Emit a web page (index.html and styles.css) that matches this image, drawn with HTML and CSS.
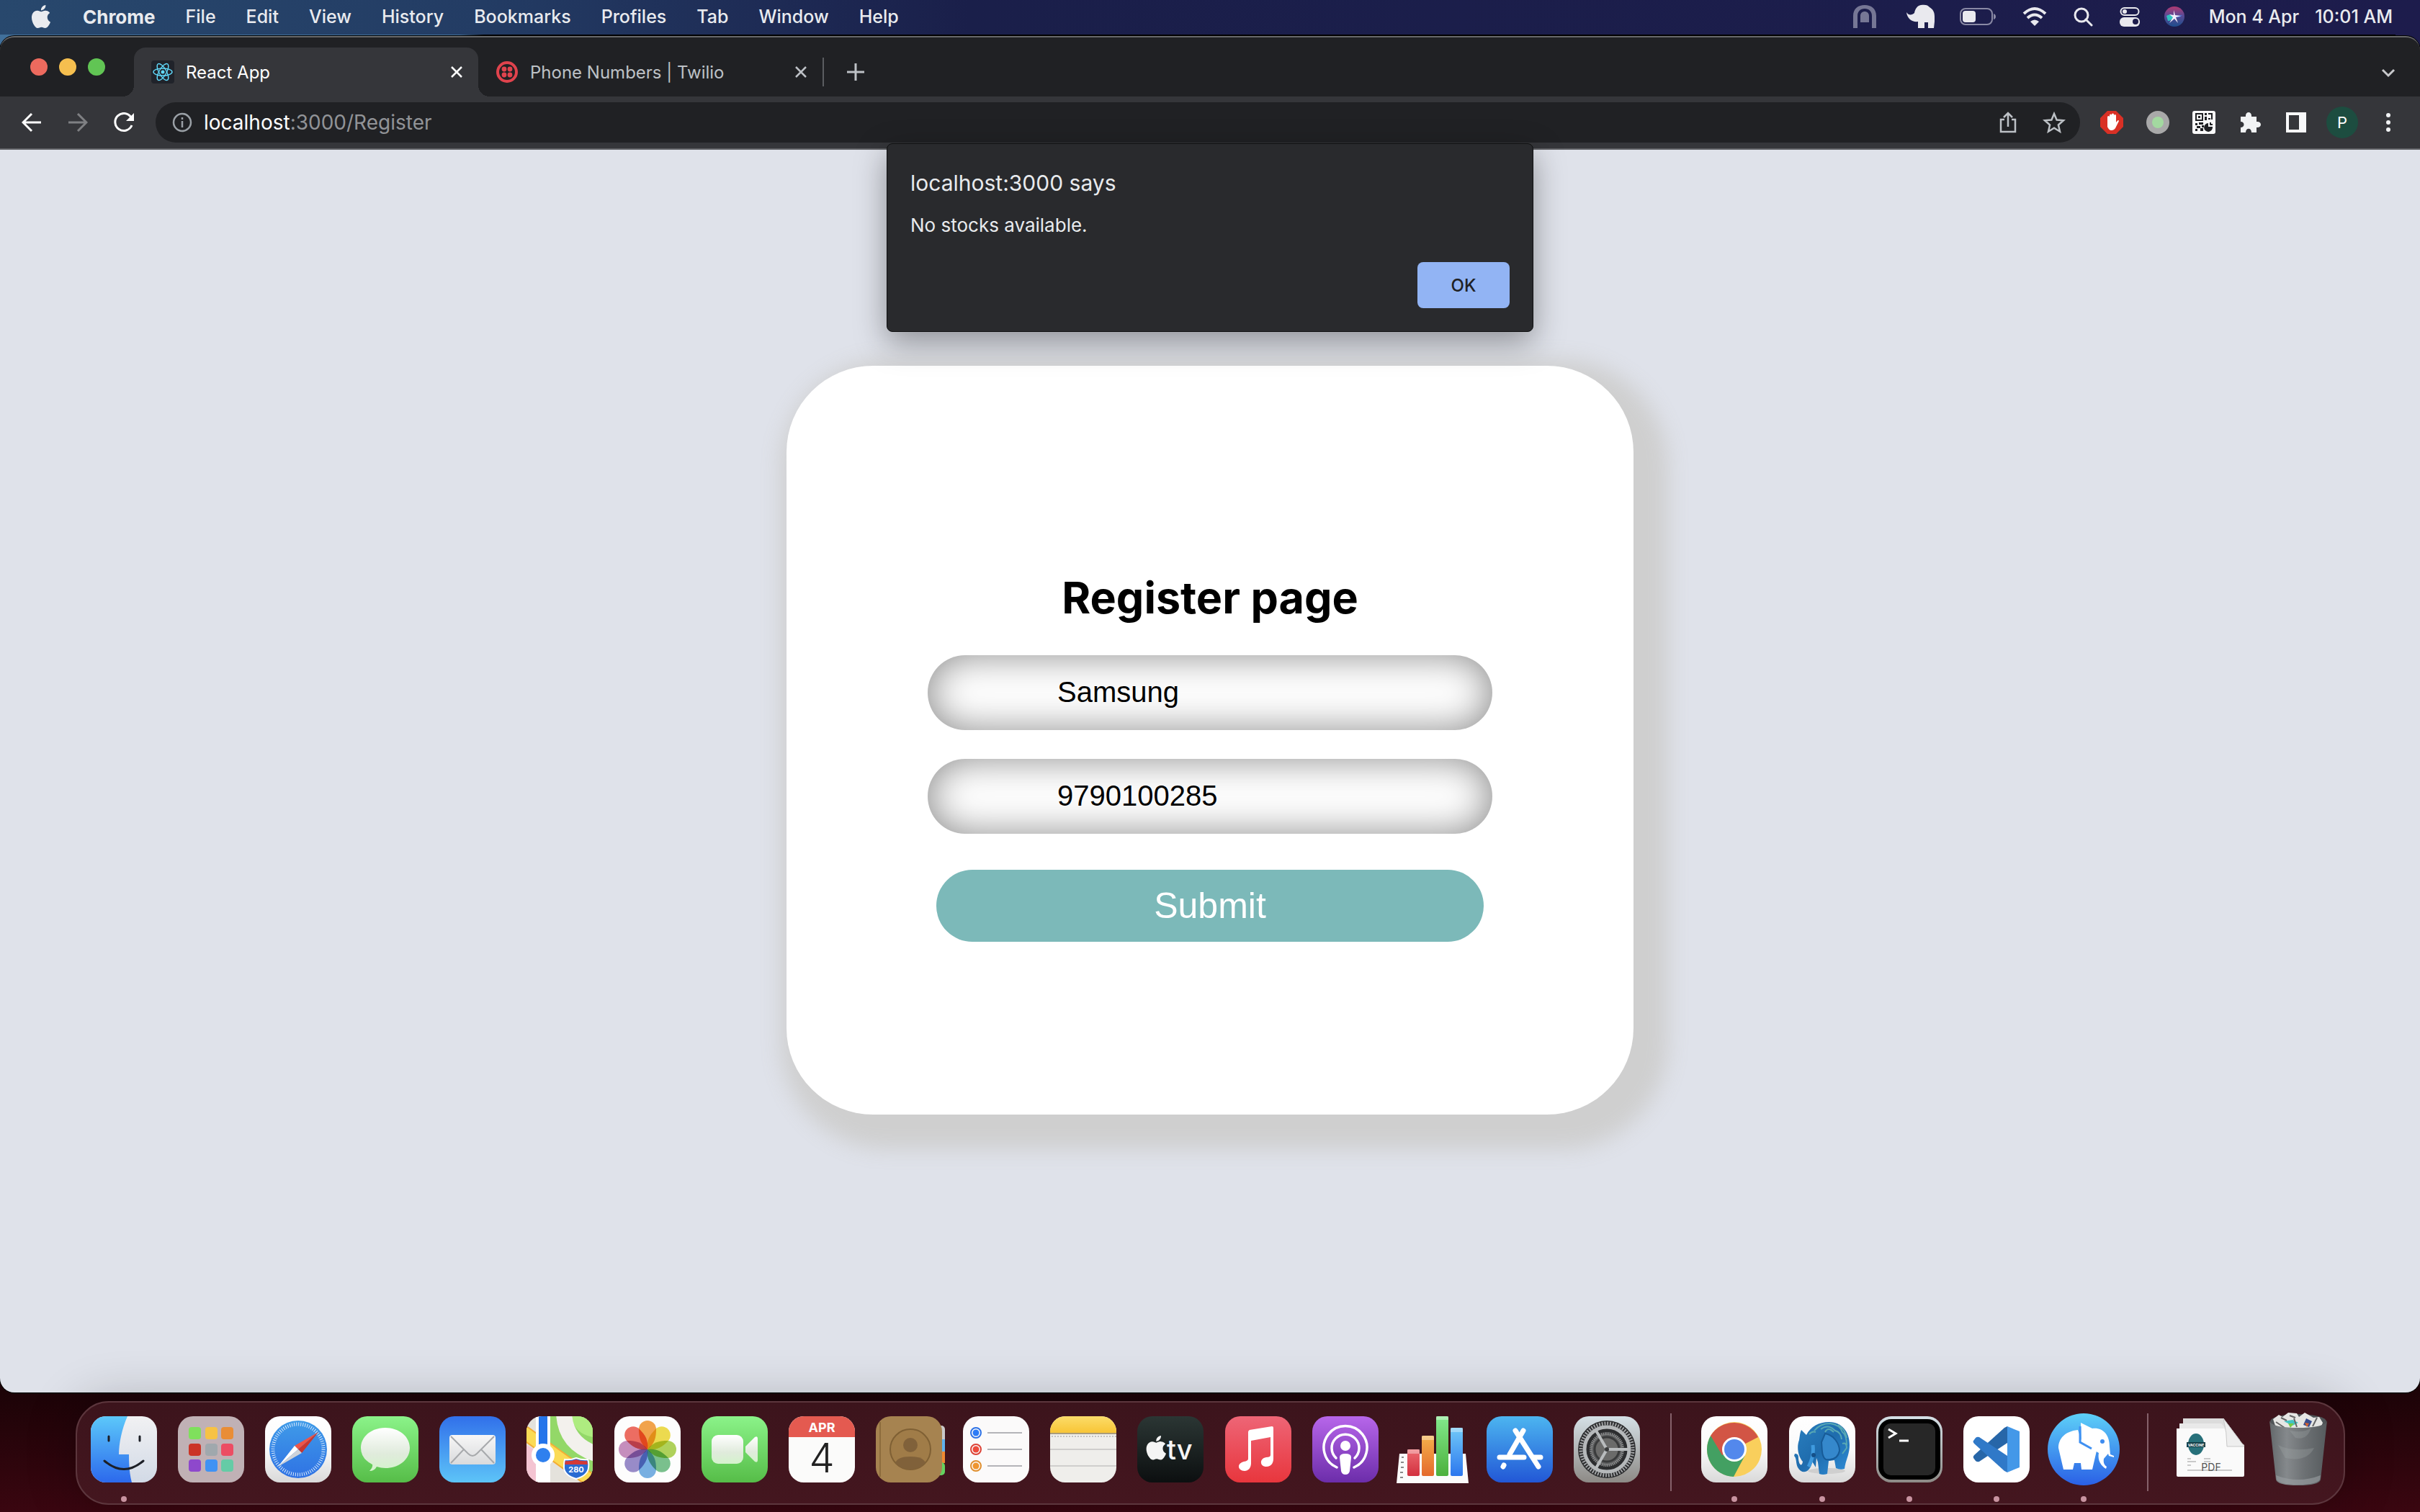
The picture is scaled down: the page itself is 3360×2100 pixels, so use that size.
FILE: index.html
```html
<!DOCTYPE html>
<html lang="en">
<head>
<meta charset="utf-8">
<title>React App</title>
<link rel="stylesheet" href="styles.css">
</head>
<body>
<nav class="menubar" aria-label="Menu bar">
  <button class="menu" aria-label="Apple menu"><svg width="32" height="32" viewBox="0 0 24 24" fill="currentColor"><path d="M12.152 6.896c-.948 0-2.415-1.078-3.96-1.04-2.04.027-3.91 1.183-4.961 3.014-2.117 3.675-.546 9.103 1.519 12.09 1.013 1.454 2.208 3.09 3.792 3.039 1.52-.065 2.09-.987 3.935-.987 1.831 0 2.35.987 3.96.948 1.637-.026 2.676-1.48 3.676-2.948 1.156-1.688 1.636-3.325 1.662-3.415-.039-.013-3.182-1.221-3.22-4.857-.026-3.04 2.48-4.494 2.597-4.559-1.429-2.09-3.623-2.324-4.39-2.376-2-.156-3.675 1.09-4.61 1.09zM15.53 3.83c.843-1.012 1.4-2.427 1.245-3.83-1.207.052-2.662.805-3.532 1.818-.78.896-1.454 2.338-1.273 3.714 1.338.104 2.715-.688 3.559-1.701"/></svg></button>
  <button class="menu menu-app">Chrome</button>
  <button class="menu">File</button>
  <button class="menu">Edit</button>
  <button class="menu">View</button>
  <button class="menu">History</button>
  <button class="menu">Bookmarks</button>
  <button class="menu">Profiles</button>
  <button class="menu">Tab</button>
  <button class="menu">Window</button>
  <button class="menu">Help</button>
  <div class="status">
    <svg width="40" height="34" viewBox="0 0 40 34" fill="#767795"><path d="M0 33V16C0 6 7 1 16 1s16 5 16 15v17h-6V16c0-6-4-10-10-10S6 10 6 16v17zM10 25v-9c0-8 12-8 12 0v9z"/></svg>
    <svg width="40" height="34" viewBox="0 0 40 34" fill="#e9e9ee"><path d="M0 11c3 5 8 4 11 1 1-6 4-10 9-11 6-1 10 0 12 3 5 3 7 7 7 13v7l-1 9h-8v-8h-5v8h-9v-9C8 25 1 20 0 11z"/></svg>
    <svg width="50" height="28" viewBox="0 0 50 28"><rect x="1" y="3" width="44" height="22" rx="7" fill="none" stroke="#8a8aa5" stroke-width="2"/><rect x="4" y="6" width="18" height="16" rx="4" fill="#e9e9ee"/><path d="M47 10q3 1 3 4t-3 4z" fill="#8a8aa5"/></svg>
    <svg width="40" height="28" viewBox="0 0 40 28" fill="none" stroke="#e9e9ee" stroke-width="4"><path d="M5 10q15-14 30 0M10 16q10-9 20 0"/><path d="M14 21q6-5 12 0l-6 6z" fill="#e9e9ee" stroke="none"/></svg>
    <svg width="30" height="28" viewBox="0 0 30 28" fill="none" stroke="#e9e9ee" stroke-width="3"><circle cx="11" cy="12" r="9"/><path d="M17 18l8 8" stroke-linecap="round"/></svg>
    <svg width="28" height="28" viewBox="0 0 28 28"><rect x="1.500" y="2" width="25" height="10" rx="5" fill="none" stroke="#e9e9ee" stroke-width="2"/><circle cx="7" cy="7" r="3" fill="#e9e9ee"/><rect y="15" width="28" height="13" rx="6" fill="#e9e9ee"/><circle cx="22" cy="21" r="4" fill="#1d1c4c"/></svg>
    <svg width="28" height="28" viewBox="0 0 28 28"><defs><linearGradient id="siri" x1="0" y1="0" x2="0" y2="1"><stop offset="0" stop-color="#b23a72"/><stop offset=".45" stop-color="#5b4a94"/><stop offset="1" stop-color="#1d4d8c"/></linearGradient></defs><circle cx="14" cy="14" r="14" fill="url(#siri)"/><path d="M3 13q6-4 10 1-3 6-8 6z" fill="#30c2c0"/><path d="M14 14L25 12q-4 5-11 2z" fill="#4a7be0"/><path d="M13 5l2 7 8 1-7 2 3 8-5-6-7 6 5-8-5-4 6 1z" fill="#f4eefc"/></svg>
    <span class="clock"><span>Mon 4 Apr</span><span>10:01 AM</span></span>
  </div>
</nav>

<div class="window">
  <header class="tabstrip">
    <div class="lights">
      <button class="light red" aria-label="Close window"></button>
      <button class="light yellow" aria-label="Minimise window"></button>
      <button class="light green" aria-label="Zoom window"></button>
    </div>
    <div class="tab active">
      <svg width="32" height="32" viewBox="0 0 32 32"><rect width="32" height="32" rx="4" fill="#20232a"/><circle cx="16" cy="16" r="2.500" fill="#61dafb"/><g fill="none" stroke="#61dafb" stroke-width="1.400"><ellipse cx="16" cy="16" rx="13" ry="5"/><ellipse cx="16" cy="16" rx="13" ry="5" transform="rotate(60 16 16)"/><ellipse cx="16" cy="16" rx="13" ry="5" transform="rotate(120 16 16)"/></g></svg>
      <span class="tab-title">React App</span>
      <button class="icon-btn" aria-label="Close tab"><svg width="18" height="18" viewBox="0 0 18 18" stroke="#fff" stroke-width="2.500"><path d="M2 2l14 14M16 2L2 16"/></svg></button>
    </div>
    <div class="tab">
      <svg width="32" height="32" viewBox="0 0 32 32"><circle cx="16" cy="16" r="13" fill="none" stroke="#e0434d" stroke-width="4"/><g fill="#e0434d"><circle cx="12" cy="12" r="3.400"/><circle cx="20" cy="12" r="3.400"/><circle cx="12" cy="20" r="3.400"/><circle cx="20" cy="20" r="3.400"/></g></svg>
      <span class="tab-title">Phone Numbers | Twilio</span>
      <button class="icon-btn" aria-label="Close tab"><svg width="18" height="18" viewBox="0 0 18 18" stroke="#bdc1c6" stroke-width="2.500"><path d="M2 2l14 14M16 2L2 16"/></svg></button>
    </div>
    <button class="icon-btn new-tab" aria-label="New tab"><svg width="24" height="24" viewBox="0 0 24 24" stroke="#bdc1c6" stroke-width="3"><path d="M12 0v24M0 12h24"/></svg></button>
    <button class="icon-btn tab-search" aria-label="Search tabs"><svg width="20" height="14" viewBox="0 0 20 14" fill="none" stroke="#c8c9cc" stroke-width="3"><path d="M2 2l8 8 8-8"/></svg></button>
  </header>

  <div class="toolbar">
    <div class="nav-buttons">
      <button class="icon-btn" aria-label="Back"><svg width="28" height="28" viewBox="0 0 28 28" fill="none" stroke="#fff" stroke-width="3"><path d="M14 2L2 14l12 12M2 14h25"/></svg></button>
      <button class="icon-btn" aria-label="Forward"><svg width="28" height="28" viewBox="0 0 28 28" fill="none" stroke="#7f8083" stroke-width="3"><path d="M14 2l12 12-12 12M26 14H1"/></svg></button>
      <button class="icon-btn" aria-label="Reload"><svg width="28" height="28" viewBox="0 0 28 28"><path d="M24 7A12 12 0 1 0 25 18" fill="none" stroke="#fff" stroke-width="3"/><path d="M28 1v11H17z" fill="#fff"/></svg></button>
    </div>
    <div class="omnibox">
      <svg width="28" height="28" viewBox="0 0 28 28" fill="none" stroke="#9aa0a6" stroke-width="2.500"><circle cx="14" cy="14" r="12"/><path d="M14 12v9M14 7v3"/></svg>
      <a class="url" href="http://localhost:3000/Register"><span class="host">localhost</span>:3000/Register</a>
      <button class="icon-btn" aria-label="Share"><svg width="32" height="32" viewBox="0 0 32 32" fill="none" stroke="#bdc1c6" stroke-width="2.500"><path d="M11 12H6v17h20V12h-5M16 22V4M10 9l6-6 6 6"/></svg></button>
      <button class="icon-btn" aria-label="Bookmark this tab"><svg width="32" height="32" viewBox="0 0 32 32" fill="none" stroke="#bdc1c6" stroke-width="2.500"><path d="M16 4l3.600 8.500 9.400.8-7.100 6.200 2.100 9.200-8-4.900-8 4.900 2.100-9.200L3 13.300l9.400-.8z"/></svg></button>
    </div>
    <div class="extensions">
      <button class="icon-btn" aria-label="AdBlock"><svg width="32" height="32" viewBox="0 0 32 32"><path d="M10 0h12l10 10v12L22 32H10L0 22V10z" fill="#d93025"/><path d="M10 19V8.500a1.500 1.500 0 0 1 3 0V6a1.500 1.500 0 0 1 3 0V5a1.500 1.500 0 0 1 3 0v1.500a1.500 1.500 0 0 1 3 0V16l2-2.500q1.500-1 2 .5L21 24q-2 3-5.500 3T10 22z" fill="#fff"/></svg></button>
      <button class="icon-btn" aria-label="Status extension"><svg width="32" height="32" viewBox="0 0 32 32"><circle cx="16" cy="16" r="16" fill="#a9a9a9"/><circle cx="16" cy="16" r="8" fill="#a3d9a0"/></svg></button>
      <button class="icon-btn" aria-label="QR code extension"><svg width="32" height="32" viewBox="0 0 32 32"><rect width="32" height="32" rx="3" fill="#fafafa"/><g fill="#202124"><path d="M4 3h11v11H4zm2 2v7h7V5z" fill-rule="evenodd"/><path d="M8 7h3v3H8zM17 3h3v3h-3zM22 3h6v9h-2V5h-4zM17 8h3v5h-3zM22 10h3v2h-3zM4 17h3v3H4zM9 16h6v3H9zM6 21h5v3H6zM4 25h3v3H4zM11 24h4v4h-4zM13 20h3v3h-3z"/><path d="M22 17v5h6a6 6 0 1 1-6-5zM24 16h2v2h2v2h-4z"/></g></svg></button>
      <button class="icon-btn" aria-label="Extensions"><svg width="32" height="32" viewBox="0 0 32 32" fill="#f1f3f4"><path d="M3 8h7c-1-8 9-8 8 0h7v7c8-1 8 9 0 8v7h-7c0-7-8-7-8 0H3v-7c6 0 6-8 0-8z"/></svg></button>
      <button class="icon-btn" aria-label="Side panel"><svg width="32" height="32" viewBox="0 0 32 32"><path d="M2 2h28v28H2zm4 4v20h14V6z" fill="#f8f9fa" fill-rule="evenodd"/></svg></button>
      <button class="avatar" aria-label="Profile">P</button>
      <button class="icon-btn" aria-label="Chrome menu"><svg width="32" height="32" viewBox="0 0 32 32" fill="#f1f3f4"><circle cx="16" cy="6" r="3"/><circle cx="16" cy="16" r="3"/><circle cx="16" cy="26" r="3"/></svg></button>
    </div>
  </div>

  <main class="page">
    <section class="alert" role="alertdialog" aria-labelledby="alert-title" aria-describedby="alert-text">
      <h2 class="alert-title" id="alert-title">localhost:3000 says</h2>
      <p class="alert-text" id="alert-text">No stocks available.</p>
      <button class="alert-ok">OK</button>
    </section>
    <form class="card">
      <h1 class="card-title">Register page</h1>
      <input class="field" type="text" aria-label="Name" value="Samsung">
      <input class="field" type="text" aria-label="Phone number" value="9790100285">
      <button class="submit" type="button">Submit</button>
    </form>
  </main>
</div>

<footer class="dock">
  <div class="app running"><svg class="app-icon" viewBox="0 0 92 92" role="img" aria-label="Finder"><defs><linearGradient id="fb" x2="0" y2="1"><stop stop-color="#5cc8fa"/><stop offset="1" stop-color="#2c69ec"/></linearGradient><linearGradient id="fw" x2="0" y2="1"><stop stop-color="#f1f1f3"/><stop offset="1" stop-color="#d2dae6"/></linearGradient></defs><rect width="92" height="92" rx="21" fill="url(#fw)"/><path d="M21 0h30C43 18 39 38 39 53h14c0 16 1 28 4 39H21A21 21 0 0 1 0 71V21A21 21 0 0 1 21 0z" fill="url(#fb)"/><path d="M25 28v6M68 28v6M19 62q27 23 54 0" fill="none" stroke="#1c1f26" stroke-width="3" stroke-linecap="round"/></svg></div>
  <div class="app"><svg class="app-icon" viewBox="0 0 92 92" role="img" aria-label="Launchpad"><rect width="92" height="92" rx="21" fill="#c0b1b5"/><rect x="15" y="15" width="17" height="17" rx="4" fill="#7fe05c"/><rect x="38" y="15" width="17" height="17" rx="4" fill="#f7c244"/><rect x="60" y="15" width="17" height="17" rx="4" fill="#e98d36"/><rect x="15" y="38" width="17" height="17" rx="4" fill="#cb3426"/><rect x="38" y="38" width="17" height="17" rx="4" fill="#a0a8ad"/><rect x="60" y="38" width="17" height="17" rx="4" fill="#ec4d63"/><rect x="15" y="60" width="17" height="17" rx="4" fill="#8e48cc"/><rect x="38" y="60" width="17" height="17" rx="4" fill="#3f92f4"/><rect x="60" y="60" width="17" height="17" rx="4" fill="#65cba6"/></svg></div>
  <div class="app"><svg class="app-icon" viewBox="0 0 92 92" role="img" aria-label="Safari"><defs><linearGradient id="wh" x2="0" y2="1"><stop stop-color="#fff"/><stop offset=".5" stop-color="#fafafa"/><stop offset="1" stop-color="#d9d9d9"/></linearGradient><linearGradient id="sf" x2="0" y2="1"><stop stop-color="#3f9be8"/><stop offset="1" stop-color="#2f72e4"/></linearGradient></defs><rect width="92" height="92" rx="21" fill="url(#wh)"/><circle cx="46" cy="46" r="40" fill="url(#sf)"/><circle cx="46" cy="46" r="35" fill="none" stroke="#d7e9fb" stroke-width="5" stroke-dasharray="1 2.054"/><path d="M74 22L41 41l5 5z" fill="#ee5548"/><path d="M74 22L46 46l5 5z" fill="#c8372f"/><path d="M18 70l23-29 5 5z" fill="#fff"/><path d="M18 70l28-24 5 5z" fill="#cfd3d8"/></svg></div>
  <div class="app"><svg class="app-icon" viewBox="0 0 92 92" role="img" aria-label="Messages"><defs><linearGradient id="gr" x2="0" y2="1"><stop stop-color="#8bf389"/><stop offset="1" stop-color="#56bd48"/></linearGradient><linearGradient id="bub" x2="0" y2="1"><stop stop-color="#fff"/><stop offset=".6" stop-color="#e0ebdc"/><stop offset="1" stop-color="#d4f3cc"/></linearGradient></defs><rect width="92" height="92" rx="21" fill="url(#gr)"/><path d="M46 16c19 0 34 12 34 28S65 72 46 72q-6 0-12-2-3 6-10 6 5-5 4-9-16-8-16-23c0-16 15-28 34-28z" fill="url(#bub)"/></svg></div>
  <div class="app"><svg class="app-icon" viewBox="0 0 92 92" role="img" aria-label="Mail"><defs><linearGradient id="ml" x2="0" y2="1"><stop stop-color="#3170ea"/><stop offset="1" stop-color="#5dc4f8"/></linearGradient><linearGradient id="en" x2="0" y2="1"><stop stop-color="#f7f7f7"/><stop offset="1" stop-color="#d9dadc"/></linearGradient></defs><rect width="92" height="92" rx="21" fill="url(#ml)"/><rect x="14" y="26" width="64" height="41" rx="4" fill="url(#en)"/><path d="M16 28l24 24q6 6 12 0l24-24M16 65l18-19M76 65L58 46" fill="none" stroke="#a7a9ac" stroke-width="2"/></svg></div>
  <div class="app"><svg class="app-icon" viewBox="0 0 92 92" role="img" aria-label="Maps"><defs><clipPath id="rc"><rect width="92" height="92" rx="21"/></clipPath></defs><g clip-path="url(#rc)"><rect width="92" height="92" fill="#e4e2dc"/><path d="M32 0h60v92L32 44z" fill="#93d868"/><path d="M62 0h30v29Q66 24 62 0z" fill="#aeec80"/><path d="M52 -4q2 42 44 56" fill="none" stroke="#f3f1ed" stroke-width="22"/><path d="M0 40l14 8v44H0z" fill="#f4c4d2"/><path d="M-4 22l100 72" stroke="#f4ad35" stroke-width="20"/><path d="M-4 22l100 72" stroke="#fbdb55" stroke-width="16"/><path d="M13 0h20v92H13z" fill="#fff"/><path d="M17 0h12v48H17z" fill="#2474ea"/><circle cx="23" cy="54" r="16" fill="#fff"/><circle cx="23" cy="54" r="10" fill="#2f80ee"/><path d="M53 60q8 1 16-2 8 3 16 2 2 4 1 12-1 10-17 15-16-5-17-15 0-8 1-12z" fill="#2a6cd2" stroke="#fff" stroke-width="2"/><path d="M54 62q8 1 15-2 7 3 15 2l1 5H53z" fill="#d43a37"/></g><text x="69" y="78" text-anchor="middle" font-family="Inter, sans-serif" font-size="11" font-weight="700" fill="#fff">280</text></svg></div>
  <div class="app"><svg class="app-icon photos" viewBox="0 0 92 92" role="img" aria-label="Photos"><defs><path id="petal" d="M46 46C36 38 34 30 34 18a12 12 0 0 1 24 0c0 12-2 20-12 28z"/></defs><rect width="92" height="92" rx="21" fill="#fdfdfd"/><g><use href="#petal" fill="#f29a38"/><use href="#petal" fill="#ecd93b" transform="rotate(45 46 46)"/><use href="#petal" fill="#a9cf4a" transform="rotate(90 46 46)"/><use href="#petal" fill="#6cbc82" transform="rotate(135 46 46)"/><use href="#petal" fill="#6aa9e0" transform="rotate(180 46 46)"/><use href="#petal" fill="#8e7fc4" transform="rotate(225 46 46)"/><use href="#petal" fill="#c183b8" transform="rotate(270 46 46)"/><use href="#petal" fill="#ec5e52" transform="rotate(315 46 46)"/></g></svg></div>
  <div class="app"><svg class="app-icon" viewBox="0 0 92 92" role="img" aria-label="FaceTime"><rect width="92" height="92" rx="21" fill="url(#gr)"/><rect x="14" y="26" width="44" height="40" rx="9" fill="url(#bub)"/><path d="M61 42l13-13q4-2 4 2v30q0 4-4 2L61 50z" fill="url(#bub)"/></svg></div>
  <div class="app"><svg class="app-icon" viewBox="0 0 92 92" role="img" aria-label="Calendar"><g clip-path="url(#rc)"><rect width="92" height="92" fill="#fbfbfa"/><rect width="92" height="29" fill="#e45a50"/></g><text x="46" y="22" text-anchor="middle" font-family="Inter, sans-serif" font-size="18" font-weight="700" fill="#fff">APR</text><text x="46" y="78" text-anchor="middle" font-family="Inter, sans-serif" font-size="56" font-weight="300" fill="#222">4</text></svg></div>
  <div class="app"><svg class="app-icon" viewBox="0 0 92 92" role="img" aria-label="Contacts"><rect x="82" y="13" width="14" height="24" rx="5" fill="#c9c9c9"/><rect x="82" y="32" width="14" height="18" fill="#5fb2ee"/><rect x="82" y="49" width="14" height="16" fill="#ee8a33"/><rect x="82" y="64" width="14" height="18" rx="5" fill="#63d35f"/><rect width="92" height="92" rx="21" fill="#a68350"/><path d="M6 8v76" stroke="#8d6c3c" stroke-width="2"/><circle cx="48" cy="46" r="28" fill="#a07c48" stroke="#7f6034" stroke-width="2"/><circle cx="48" cy="40" r="10" fill="#80613a"/><path d="M27 65q3-9 21-9t21 9q-8 9-21 9t-21-9z" fill="#80613a"/></svg></div>
  <div class="app"><svg class="app-icon" viewBox="0 0 92 92" role="img" aria-label="Reminders"><rect width="92" height="92" rx="21" fill="#fbfafa"/><g fill="none" stroke-width="2"><circle cx="18" cy="23" r="7" stroke="#2d72e6"/><circle cx="18" cy="46" r="7" stroke="#dc4236"/><circle cx="18" cy="69" r="7" stroke="#e08f2e"/></g><circle cx="18" cy="23" r="4.500" fill="#2d7cf6"/><circle cx="18" cy="46" r="4.500" fill="#ec4b3c"/><circle cx="18" cy="69" r="4.500" fill="#ef962f"/><path d="M34 23h48M34 46h48M34 69h48" stroke="#b4b4b8" stroke-width="2"/></svg></div>
  <div class="app"><svg class="app-icon" viewBox="0 0 92 92" role="img" aria-label="Notes"><defs><linearGradient id="nt" x2="0" y2="1"><stop stop-color="#fbdc6a"/><stop offset="1" stop-color="#f8c433"/></linearGradient></defs><g clip-path="url(#rc)"><rect width="92" height="92" fill="#efeeeb"/><rect width="92" height="24" fill="url(#nt)"/><path d="M0 24h92" stroke="#a89c7c" stroke-width="2"/><path d="M2 28h90" stroke="#c3c2c0" stroke-width="2" stroke-dasharray="2 2"/><path d="M0 46h92M0 69h92" stroke="#cfcecd" stroke-width="2"/></g></svg></div>
  <div class="app"><svg class="app-icon" viewBox="0 0 92 92" role="img" aria-label="TV"><defs><linearGradient id="tv" x2="0" y2="1"><stop stop-color="#2b3634"/><stop offset="1" stop-color="#0c0f10"/></linearGradient></defs><rect width="92" height="92" rx="21" fill="url(#tv)"/><path transform="translate(9.500 27) scale(1.400)" fill="#f5f5f5" d="M12.152 6.896c-.948 0-2.415-1.078-3.960-1.040-2.040.027-3.910 1.183-4.961 3.014-2.117 3.675-.546 9.103 1.519 12.090 1.013 1.454 2.208 3.090 3.792 3.039 1.520-.065 2.090-.987 3.935-.987 1.831 0 2.350.987 3.960.948 1.637-.026 2.676-1.480 3.676-2.948 1.156-1.688 1.636-3.325 1.662-3.415-.039-.013-3.182-1.221-3.220-4.857-.026-3.040 2.480-4.494 2.597-4.559-1.429-2.090-3.623-2.324-4.390-2.376-2-.156-3.675 1.090-4.610 1.090zM15.530 3.830c.843-1.012 1.400-2.427 1.245-3.830-1.207.052-2.662.805-3.532 1.818-.780.896-1.454 2.338-1.273 3.714 1.338.104 2.715-.688 3.559-1.701"/><text x="41" y="60" font-family="Inter, sans-serif" font-size="38" font-weight="500" fill="#f5f5f5">tv</text></svg></div>
  <div class="app"><svg class="app-icon" viewBox="0 0 92 92" role="img" aria-label="Music"><defs><linearGradient id="mu" x2="0" y2="1"><stop stop-color="#ee6576"/><stop offset="1" stop-color="#e8363d"/></linearGradient></defs><rect width="92" height="92" rx="21" fill="url(#mu)"/><path d="M32 22q0-2 2-3l31-5q2 0 2 2v43c0 7-4 11-10 11-9 0-10-11 0-13q6 0 6-3V29l-27 5v31c0 7-4 11-9 11-9 0-12-10-1-13q6-1 6-4z" fill="#fff"/></svg></div>
  <div class="app"><svg class="app-icon" viewBox="0 0 92 92" role="img" aria-label="Podcasts"><defs><linearGradient id="po" x2="0" y2="1"><stop stop-color="#b766ea"/><stop offset="1" stop-color="#6c2daa"/></linearGradient></defs><rect width="92" height="92" rx="21" fill="url(#po)"/><g fill="none" stroke="#fff" stroke-width="3.500" stroke-linecap="round"><path d="M34 71a30 30 0 1 1 24 0"/><path d="M33 58a19 19 0 1 1 26 0"/></g><circle cx="46" cy="41" r="7" fill="#fff"/><path d="M38 57q0-5 8-5t8 5l-2 19q-1 5-6 5t-6-5z" fill="#fff"/></svg></div>
  <div class="app"><svg class="app-icon" viewBox="0 0 92 92" role="img" aria-label="Numbers"><defs><linearGradient id="nr" x2="0" y2="1"><stop stop-color="#ec6a70"/><stop offset="1" stop-color="#d2303f"/></linearGradient><linearGradient id="no" x2="0" y2="1"><stop stop-color="#f5b14b"/><stop offset="1" stop-color="#e4692c"/></linearGradient><linearGradient id="ng" x2="0" y2="1"><stop stop-color="#83ea8d"/><stop offset="1" stop-color="#4cb03c"/></linearGradient><linearGradient id="nb" x2="0" y2="1"><stop stop-color="#71c9f8"/><stop offset="1" stop-color="#2c77ee"/></linearGradient></defs><path d="M0 52h92l4 41H-4z" fill="#fbfbfb"/><rect x="11" y="46" width="17" height="37" rx="2" fill="url(#nr)"/><rect x="31" y="27" width="17" height="56" rx="2" fill="url(#no)"/><rect x="51" y="0" width="17" height="83" rx="2" fill="url(#ng)"/><rect x="71" y="16" width="17" height="67" rx="2" fill="url(#nb)"/><g fill="#fff" opacity=".35"><rect x="11" y="46" width="17" height="6"/><rect x="31" y="27" width="17" height="6"/><rect x="51" width="17" height="5"/><rect x="71" y="16" width="17" height="6"/></g><path d="M3 57h3M2 64h4M2 71h4M1 78h4M1 85h4" stroke="#8a8a8a" stroke-width="2"/></svg></div>
  <div class="app"><svg class="app-icon" viewBox="0 0 92 92" role="img" aria-label="App Store"><defs><linearGradient id="as" x2="0" y2="1"><stop stop-color="#4cb5f0"/><stop offset="1" stop-color="#2257d6"/></linearGradient></defs><rect width="92" height="92" rx="21" fill="url(#as)"/><g stroke="#fff" stroke-width="7" stroke-linecap="round"><path d="M40 20l32 50"/><path d="M51 20L32 53"/><path d="M24 68l-1 2"/><path d="M18 57h34M66 57h9"/></g></svg></div>
  <div class="app"><svg class="app-icon" viewBox="0 0 92 92" role="img" aria-label="System Preferences"><defs><linearGradient id="sy" x2="0" y2="1"><stop stop-color="#d5e0e6"/><stop offset="1" stop-color="#8d8a86"/></linearGradient></defs><rect width="92" height="92" rx="21" fill="url(#sy)"/><circle cx="46" cy="46" r="40" fill="#2c2d2f"/><circle cx="46" cy="46" r="36" fill="none" stroke="#a6a8aa" stroke-width="5" stroke-dasharray="1.800 1.970"/><circle cx="46" cy="46" r="31" fill="none" stroke="#b5b8ba" stroke-width="5"/><circle cx="46" cy="46" r="22" fill="#5c5d5e" stroke="#8b8c8d" stroke-width="4" stroke-dasharray="1.500 1"/><circle cx="46" cy="46" r="17" fill="#6b6b6a" stroke="#3a3b3c" stroke-width="3"/><path d="M46 46h30M46 46L31 20M46 46L31 72" stroke="#b9bcbe" stroke-width="4"/><circle cx="46" cy="46" r="3" fill="#3a3b3c"/></svg></div>
  <div class="divider"></div>
  <div class="app running"><svg class="app-icon" viewBox="0 0 92 92" role="img" aria-label="Google Chrome"><rect width="92" height="92" rx="21" fill="url(#wh)"/><circle cx="46" cy="46" r="38" fill="#f9cf5c"/><path d="M46 46L13.100 27A38 38 0 0 1 79 29H46z" fill="#d25545"/><path d="M13.100 27L46 46l14.500 9L45 84A38 38 0 0 1 13.100 27z" fill="#43a062"/><path d="M46 29h33L46 46 29 54 13.100 27z" fill="#d25545"/><circle cx="46" cy="46" r="17" fill="#fff"/><circle cx="46" cy="46" r="14" fill="#5388ec"/></svg></div>
  <div class="app running"><svg class="app-icon" viewBox="0 0 92 92" role="img" aria-label="Postgres client"><defs><linearGradient id="pg" x2="1" y2="1"><stop stop-color="#2a80c0"/><stop offset=".5" stop-color="#1f6cad"/><stop offset="1" stop-color="#2f8ed8"/></linearGradient></defs><rect width="92" height="92" rx="21" fill="url(#wh)"/><ellipse cx="52" cy="76" rx="26" ry="4" fill="#cfcfcf"/><path d="M24 26c6-12 18-18 31-18 18 0 29 13 29 32 0 14-6 22-7 33q-6 2-12-1l-2-11-8 1-2 18q-6 2-11 0l-2-16-2-6-1 13-3-5-2-3c-2 15-14 19-20 8-3-6-1-12-5-16l1-3c5 0 5 3 5 7 1 10 5 11 6 4C13 56 10 44 14 33c1-6 1-10 3-14z" fill="url(#pg)"/><path d="M50 24c12 2 20 14 20 24-2 10-10 13-19 12-6-4-5-14-6-24z" fill="#3588cc" stroke="#175b98" stroke-width="2"/><path d="M35 20q8-10 22-10 14 2 17 12 6 4 6 18M44 18q10-8 20 2 8 2 9 12M50 22q4-8 12 0M28 25q4-5 9-3M68 12q10 6 12 18M74 38q6-2 6 6l-6 8" fill="none" stroke="#58a8b4" stroke-width="2"/><path d="M33 40q2 16-6 30" fill="none" stroke="#3f9ade" stroke-width="5"/><circle cx="34" cy="54" r="3" fill="#155089"/></svg></div>
  <div class="app running"><svg class="app-icon" viewBox="0 0 92 92" role="img" aria-label="Terminal"><rect width="92" height="92" rx="21" fill="url(#sy)"/><rect x="3" y="4" width="86" height="84" rx="18" fill="#000"/><rect x="10" y="10" width="72" height="72" rx="10" fill="#272727"/><path d="M17 18l10 6-10 6M32 34h13" fill="none" stroke="#fff" stroke-width="3"/></svg></div>
  <div class="app running"><svg class="app-icon" viewBox="0 0 92 92" role="img" aria-label="Visual Studio Code"><rect width="92" height="92" rx="21" fill="#fff"/><path d="M61 14L61 37 22 63q-3 1-5-1l-3-4q-1-2 1-4L57 16z" fill="#2766a8"/><path d="M61 78V55L22 29q-3-1-5 1l-3 4q-1 2 1 4l42 38z" fill="#3079c8"/><path d="M61 14l17 7v50l-17 7z" fill="#4498e8"/></svg></div>
  <div class="app running"><svg class="app-icon" viewBox="0 0 92 92" role="img" aria-label="MAMP"><defs><linearGradient id="mp" x2="0" y2="1"><stop stop-color="#5dd0f8"/><stop offset="1" stop-color="#2a60e6"/></linearGradient></defs><circle cx="46" cy="46" r="50" fill="url(#mp)"/><path d="M38 19c-18 2-27 12-27 25l7 30h13l2-9h9l1 9h15l6-26-20-11z" fill="#fff"/><path d="M42 9l16 8c14-2 24 8 24 25l1 11 5 2v2l-7-2-1-3-6 7c-1 6 1 9 4 11l-1 3c-7-4-12-12-10-22l-24-14z" fill="#fff"/><circle cx="72" cy="35" r="3" fill="#3e8cf0"/><path d="M41 14v22l16 9" fill="none" stroke="#3f90f2" stroke-width="3"/></svg></div>
  <div class="divider"></div>
  <div class="app"><svg class="app-icon" viewBox="0 0 92 92" role="img" aria-label="Documents stack"><path d="M7 3h56l23 30v40H7z" fill="#dcdcdc"/><path d="M2 10h58l24 28v36H2z" fill="#e9e9e9"/><path d="M-2 17h66l28 23v42q0 2-2 2H0q-2 0-2-2z" fill="#fafafa"/><path d="M63 3q5 20 5 39h24z" fill="#eee" stroke="#c9c9c9"/><ellipse cx="25" cy="39" rx="11" ry="15" fill="#27707a"/><path d="M12 36h26v7H12z" fill="#153f48"/><text x="25" y="42" text-anchor="middle" font-family="Inter, sans-serif" font-size="5" font-weight="700" fill="#fff">VACCINE</text><path d="M13 59h5M36 59h9M13 63h12M36 63h9M13 68h5M13 75h62" stroke="#999" stroke-width="1"/><text x="46" y="76" text-anchor="middle" font-family="Inter, sans-serif" font-size="14" fill="#555">PDF</text></svg></div>
  <div class="app"><svg class="app-icon" viewBox="0 0 92 92" role="img" aria-label="Trash"><defs><linearGradient id="tr"><stop stop-color="#63686b"/><stop offset=".3" stop-color="#85898c"/><stop offset=".6" stop-color="#6d7174"/><stop offset="1" stop-color="#565b5e"/></linearGradient></defs><ellipse cx="46" cy="7" rx="39" ry="10" fill="#4f5457"/><path d="M11 4l8-6 5 3 8-6 12 1 3 5 8-6 12 7 8-1 5 8-4 10H16z" fill="#e6e6e4"/><path d="M26 7l12-2 8 4-8 4z" fill="#42c3c4"/><path d="M32 10l8 0-5 6z" fill="#7ac943"/><path d="M57 3l8 4-4 8-8-3z" fill="#394c8c"/><path d="M55 9l6 1-3 5z" fill="#d8622b"/><path d="M15 8l12 8M40 3l4 12M72 2l-6 12M22 2l8 4M34-1l8 3" stroke="#666" stroke-width="2"/><path d="M6 6c3 8 20 10 40 10S83 14 86 6l-9 82q-2 8-31 8t-31-8z" fill="url(#tr)"/><path d="M34 20q20 4 30-4-6 18-22 14zM18 40q20 10 50 4-10 20-40 14z" fill="#a3a8aa" opacity=".3"/><path d="M15 82q31 12 62 0l-1 6q-4 7-30 7t-30-7z" fill="#9ba0a3" opacity=".6"/></svg></div>
</footer>
</body>
</html>
```
FILE: styles.css
```css
* { box-sizing: border-box; }

body {
  margin: 0;
  min-height: 100vh;
  display: flex;
  flex-direction: column;
  font-family: Inter, "Liberation Sans", sans-serif;
  background:
    linear-gradient(90deg, #41709b 19%, #000 20%, #000 99%, #1d1c4c 99%) top / 100% 80px no-repeat,
    linear-gradient(#1c0307 92%, #3a0610 100%);
}

button {
  border: 0;
  padding: 0;
  margin: 0;
  background: none;
  color: inherit;
  font: inherit;
}

svg { display: block; flex: none; }

.menubar {
  display: flex;
  align-items: center;
  gap: 42px;
  height: 48px;
  padding: 0 38px 2px 41px;
  color: #e9ebef;
  font-size: 25px;
  font-weight: 500;
  background: linear-gradient(90deg, #28486d, #233c64 20%, #1a1f4a 40%, #1d1c4c);
}
.menu { white-space: nowrap; }
.menu-app { font-size: 26px; font-weight: 700; }
.status { display: flex; align-items: center; gap: 34px; margin-left: auto; }
.clock { display: flex; gap: 22px; white-space: nowrap; }

.window {
  flex: 1;
  display: flex;
  flex-direction: column;
  margin: 2px 0 12px;
  border-radius: 20px;
  background: #202124;
  box-shadow: 0 0 0 1px #000;
}

.tabstrip {
  display: flex;
  align-items: center;
  height: 84px;
  border-top: 2px solid #67686a;
  border-radius: 20px 20px 0 0;
}
.lights { display: flex; gap: 16px; width: 186px; padding-left: 42px; }
.light { width: 24px; height: 24px; border-radius: 50%; }
.red { background: #ed6a5e; }
.yellow { background: #f5bf4f; }
.green { background: #61c554; }

.tab {
  align-self: flex-end;
  display: flex;
  align-items: center;
  gap: 16px;
  width: 478px;
  height: 68px;
  padding: 0 21px 0 24px;
  color: #bdc1c6;
  font-size: 24px;
}
.tab.active {
  position: relative;
  border-radius: 16px 16px 0 0;
  background: #35363a;
  color: #fff;
}
.tab.active::before,
.tab.active::after {
  content: "";
  position: absolute;
  bottom: 0;
  width: 16px;
  height: 16px;
}
.tab.active::before { left: -16px; background: radial-gradient(circle at 0 0, transparent 16px, #35363a 16px); }
.tab.active::after { right: -16px; background: radial-gradient(circle at 100% 0, transparent 16px, #35363a 16px); }
.tab-title { flex: 1; white-space: nowrap; }
.new-tab { align-self: flex-end; margin-bottom: 14px; padding: 8px 0 8px 32px; border-left: 2px solid #5b5d61; }
.tab-search { margin: 18px 34px 0 auto; }

.toolbar {
  display: flex;
  align-items: center;
  height: 74px;
  padding: 0 28px 0 30px;
  background: #35363a;
  border-bottom: 2px solid #606165;
}
.nav-buttons { display: flex; gap: 36px; margin-right: 30px; }
.omnibox {
  flex: 1;
  display: flex;
  align-items: center;
  gap: 32px;
  height: 56px;
  padding: 0 20px 0 23px;
  border-radius: 28px;
  background: #202124;
}
.url { flex: 1; margin-left: -16px; color: #919397; font-size: 28px; text-decoration: none; }
.host { color: #fff; }
.extensions { display: flex; align-items: center; gap: 32px; margin-left: 28px; }
.avatar {
  width: 44px;
  height: 44px;
  margin: 0 -6px;
  border-radius: 50%;
  background: #1d4d40;
  color: #fff;
  font-size: 22px;
}

.page {
  position: relative;
  flex: 1;
  padding: 300px 0;
  border-radius: 0 0 20px 20px;
  background: #dfe2ea;
}

.alert {
  position: absolute;
  top: -9px;
  right: 0;
  left: 0;
  display: flex;
  flex-direction: column;
  width: 898px;
  margin: 0 auto;
  padding: 34px 32px 32px;
  border: 1px solid #0e0f10;
  border-radius: 8px;
  background: #292a2d;
  color: #e8eaed;
  box-shadow: 0 14px 44px rgba(0, 0, 0, .36);
}
.alert-title { margin: 0; font-size: 30px; font-weight: 400; line-height: 40px; }
.alert-text { margin: 22px 0 34px; font-size: 26px; line-height: 34px; }
.alert-ok {
  align-self: flex-end;
  width: 128px;
  height: 64px;
  border-radius: 8px;
  background: #92b4f4;
  color: #202124;
  font-size: 24px;
  font-weight: 500;
}

.card {
  display: flex;
  flex-direction: column;
  align-items: center;
  gap: 40px;
  width: 35%;
  margin: 0 auto;
  padding: 282px 0 240px;
  border-radius: 120px;
  background: #fff;
  box-shadow: 20px 20px 30px 28px #cfcfcf;
}
.card-title { margin: 0; font-size: 61px; font-weight: 700; line-height: 80px; }
.field {
  width: 784px;
  height: 104px;
  padding: 0 180px 2px;
  border: 0;
  border-radius: 52px;
  background: #fff;
  box-shadow: inset 0 0 54px #888;
  color: #000;
  font: 40px "Liberation Sans", sans-serif;
}
.submit {
  width: 760px;
  height: 100px;
  margin-top: 10px;
  border-radius: 50px;
  background: #7cb9b9;
  color: #fff;
  font: 50px "Liberation Sans", sans-serif;
}

.dock {
  position: relative;
  display: flex;
  height: 144px;
  margin: 0 104px 10px 105px;
  padding: 19px 2px 0 4px;
  border: 2px solid #5c363d;
  border-radius: 46px;
  background: linear-gradient(#3c141c, #44161f);
  box-shadow: 0 0 70px rgba(0, 0, 0, .24);
}
.app {
  flex: 1;
  display: flex;
  flex-direction: column;
  align-items: center;
  gap: 19px;
}
.app.running::after {
  content: "";
  width: 8px;
  height: 8px;
  border-radius: 50%;
  background: #c893a0;
}
.app-icon { width: 92px; height: 92px; overflow: visible; }
.photos use { mix-blend-mode: multiply; opacity: .9; }
.photos { isolation: isolate; }
.divider { width: 56px; }
.divider::before {
  content: "";
  display: block;
  width: 2px;
  height: 108px;
  margin: -4px auto 0;
  background: #85616a;
}
```
